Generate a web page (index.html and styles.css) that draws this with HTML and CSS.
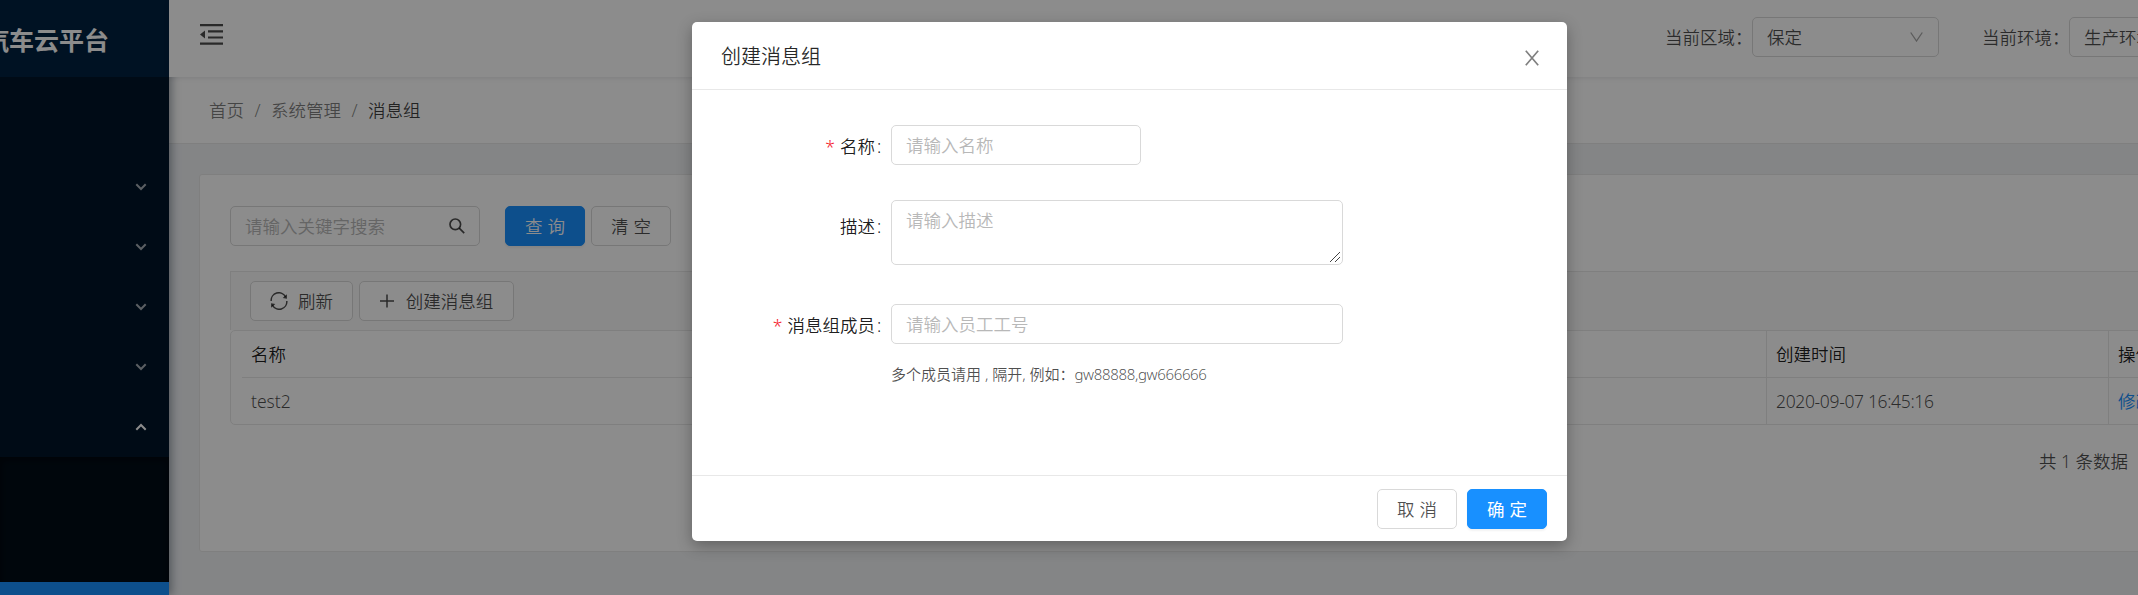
FILE: index.html
```html
<!DOCTYPE html>
<html lang="zh-CN">
<head>
<meta charset="utf-8">
<title>消息组</title>
<link rel="stylesheet" href="styles.css">
</head>
<body>
<div class="app">
  <aside class="sider">
    <div class="logo">汽车云平台</div>
    <ul class="menu">
      <li class="menu-item"></li>
      <li class="menu-item"><svg class="caret" viewBox="0 0 12 8"><path d="M1.3 1.3 6 6 10.7 1.3"/></svg></li>
      <li class="menu-item"><svg class="caret" viewBox="0 0 12 8"><path d="M1.3 1.3 6 6 10.7 1.3"/></svg></li>
      <li class="menu-item"><svg class="caret" viewBox="0 0 12 8"><path d="M1.3 1.3 6 6 10.7 1.3"/></svg></li>
      <li class="menu-item"><svg class="caret" viewBox="0 0 12 8"><path d="M1.3 1.3 6 6 10.7 1.3"/></svg></li>
      <li class="menu-item open"><svg class="caret" viewBox="0 0 12 8"><path d="M1.3 6.7 6 2 10.7 6.7"/></svg></li>
    </ul>
    <div class="submenu"><div class="submenu-selected"></div></div>
  </aside>
  <div class="main">
    <header class="header">
      <svg class="fold" viewBox="0 0 23 21"><path d="M0 0h23v2.2H0zM8 6.200h15v2.200H8zM8 12.400h15v2.200H8zM0 18.600h23v2.200H0zM0 10.400 5 6.400v8z"/></svg>
      <div class="filters">
        <span class="filter-label">当前区域：</span>
        <div class="select">保定<svg class="arrow" viewBox="0 0 13 10"><path d="M.7.500 6.500 9 12.300.500"/></svg></div>
        <span class="filter-label second">当前环境：</span>
        <div class="select">生产环境</div>
      </div>
    </header>
    <nav class="breadcrumb"><span>首页</span><i>/</i><span>系统管理</span><i>/</i><b>消息组</b></nav>
    <section class="card">
      <div class="search-row">
        <div class="search"><input class="input" placeholder="请输入关键字搜索"><svg class="search-icon" viewBox="0 0 16 16"><circle cx="6.300" cy="6.300" r="5.300"/><path d="m10.200 10.200 5 5"/></svg></div>
        <button class="btn primary two query">查询</button>
        <button class="btn two">清空</button>
      </div>
      <div class="toolbar">
        <button class="btn refresh"><svg class="sync" viewBox="0 0 18 18"><path d="M1.200 9A7.600 7.600 0 0 1 15.500 4.800M16.800 9A7.600 7.600 0 0 1 2.500 13.200"/><path class="tip" d="M16.900 2.300v4.400l-4.200-.8zM1.100 15.700v-4.400l4.200.8z"/></svg>刷新</button>
        <button class="btn create"><svg class="plus" viewBox="0 0 14 14"><path d="M0 7h14M7 .5v13"/></svg>创建消息组</button>
      </div>
      <div class="table">
        <div class="row head"><div class="cell">名称</div><div class="cell">创建时间</div><div class="cell">操作</div></div>
        <div class="row"><div class="cell">test2</div><div class="cell tight">2020-09-07 16:45:16</div><div class="cell"><a>修改</a></div></div>
      </div>
      <div class="pager">共 1 条数据</div>
    </section>
  </div>
</div>
<div class="mask">
  <div class="modal">
    <div class="modal-head"><span>创建消息组</span><svg class="close" viewBox="0 0 14 16"><path d="M.8.800 13.200 15.200M13.200.800.800 15.200"/></svg></div>
    <div class="modal-body">
      <div class="form-row name-row"><label><em>*</em>名称<s>:</s></label><input class="input short" placeholder="请输入名称"></div>
      <div class="form-row desc-row"><label>描述<s>:</s></label><div class="area"><textarea class="input" placeholder="请输入描述"></textarea><svg class="grip" viewBox="0 0 10 10"><path d="M0 10 10 0M5 10l5-5"/></svg></div></div>
      <div class="form-row member-row"><label><em>*</em>消息组成员<s>:</s></label><input class="input" placeholder="请输入员工工号"></div>
      <p class="hint">多个成员请用 , 隔开, 例如：<span class="tight">gw88888,gw666666</span></p>
    </div>
    <div class="modal-foot"><button class="btn two">取消</button><button class="btn primary two ok">确定</button></div>
  </div>
</div>
</body>
</html>
```
FILE: styles.css
```css
* { box-sizing: border-box; }
html, body { margin: 0; height: 595px; overflow: hidden; }
body {
  position: relative;
  font: 350 17.5px/26px "Noto Sans", "Noto Sans CJK SC", sans-serif;
  color: rgba(0, 0, 0, .7);
}
svg { display: block; fill: none; stroke: currentColor; flex: none; }

.app { display: flex; width: 2259px; height: 595px; background: #f0f2f5; }

.sider { display: flex; flex-direction: column; width: 169px; flex: none; background: #001529; box-shadow: 2.5px 0 8px rgba(0, 21, 41, .35); z-index: 1; }
.logo { display: flex; justify-content: flex-end; align-items: center; height: 77px; padding: 3px 60px 0 0; background: #002140; color: #fff; font-size: 25px; font-weight: 700; white-space: nowrap; overflow: hidden; }
.menu { list-style: none; margin: 0; padding: 20px 0 0; }
.menu-item { display: flex; align-items: center; justify-content: flex-end; height: 60px; padding-right: 22px; color: rgba(255, 255, 255, .65); }
.menu-item.open { color: #fff; }
.caret { width: 12px; height: 8px; stroke-width: 2; }
.submenu { flex: 1; display: flex; flex-direction: column; justify-content: flex-end; background: #000c17; box-shadow: inset 0 2px 10px rgba(0, 0, 0, .45); }
.submenu-selected { height: 13px; background: #1890ff; }

.main { flex: 1; display: flex; flex-direction: column; min-width: 0; }
.header { display: flex; justify-content: space-between; height: 77px; flex: none; padding: 17px 3px 0 31px; background: #fff; box-shadow: 0 1px 5px rgba(0, 21, 41, .1); position: relative; z-index: 2; }
.fold { width: 23px; height: 21px; margin-top: 7px; fill: currentColor; stroke: none; }
.filters { display: flex; align-items: center; height: 40px; }
.filter-label { width: 87px; white-space: nowrap; }
.filter-label.second { margin-left: 43px; }
.select { display: flex; align-items: center; justify-content: space-between; width: 187px; height: 40px; padding: 0 15px 0 14px; border: 1px solid #d9d9d9; border-radius: 5px; }
.arrow { width: 13px; height: 10px; margin-top: -1px; color: rgba(0, 0, 0, .35); stroke-width: 1.3; }

.breadcrumb { display: flex; align-items: center; height: 67px; flex: none; padding-left: 40px; background: #fff; border-bottom: 1px solid #e8e8e8; color: rgba(0, 0, 0, .5); }
.breadcrumb i { font-style: normal; width: 27px; text-align: center; }
.breadcrumb b { font-weight: 350; color: rgba(0, 0, 0, .75); }

.card { margin: 30px 30px 0; height: 378px; padding: 31px 30px; background: #fff; border: 1px solid #e8e8e8; border-radius: 3px; }
.search-row { display: flex; }
.search { position: relative; width: 250px; }
.search-icon { position: absolute; right: 15px; top: 12px; width: 16px; height: 16px; stroke-width: 1.7; }
.input { display: block; width: 100%; height: 40px; margin: 0; padding: 0 14px; border: 1px solid #d9d9d9; border-radius: 5px; background: #fff; font: inherit; outline: none; resize: none; }
.input::placeholder { color: #b8b8b8; opacity: 1; }

.btn { display: flex; align-items: center; justify-content: center; height: 40px; padding: 0; border: 1px solid #d9d9d9; border-radius: 5px; background: #fff; font: inherit; color: inherit; white-space: nowrap; }
.btn.two { width: 80px; letter-spacing: 5px; padding-left: 5px; }
.btn.primary { background: #1890ff; border-color: #1890ff; color: #fff; box-shadow: 0 2px 2px rgba(0, 0, 0, .05); }
.query { margin: 0 6px 0 25px; }
.toolbar { display: flex; gap: 6px; height: 59px; margin-top: 25px; padding: 9px 19px; background: #fafafa; border: 1px solid #e8e8e8; border-bottom: 0; }
.refresh { width: 103px; gap: 10px; }
.create { width: 155px; gap: 12px; }
.sync { width: 18px; height: 18px; stroke-width: 1.5; }
.sync .tip { fill: currentColor; stroke: none; }
.plus { width: 14px; height: 14px; stroke-width: 1.5; }

.table { height: 95px; border: 1px solid #e8e8e8; border-radius: 5px; }
.row { display: grid; grid-template-columns: 1535px 342px 1fr; height: 46px; }
.row.head { height: 47px; color: rgba(0, 0, 0, .9); background: linear-gradient(#e8e8e8, #e8e8e8) 11px 46px / 100% 1px no-repeat; }
.cell { padding: 10px 0 0 9px; white-space: nowrap; }
.cell:first-child { padding-left: 20px; }
.cell + .cell { border-left: 1px solid #e8e8e8; }
.cell a { color: #1890ff; }
.tight { letter-spacing: -.35px; }
.pager { margin: 23px 0 0 1809px; white-space: nowrap; }

.mask { position: absolute; left: 0; top: 0; z-index: 10; display: flex; justify-content: center; align-items: flex-start; width: 2259px; height: 595px; padding-top: 22px; background: rgba(0, 0, 0, .45); }
.modal { width: 875px; height: 519px; background: #fff; border-radius: 5px; box-shadow: 0 5px 15px rgba(0, 0, 0, .3); }
.modal-head { display: flex; align-items: center; justify-content: space-between; height: 68px; padding: 3px 28px 0 29px; border-bottom: 1px solid #e8e8e8; color: rgba(0, 0, 0, .85); font-size: 20px; }
.close { width: 14px; height: 16px; margin-top: 2px; color: rgba(0, 0, 0, .5); stroke-width: 1.7; }
.modal-body { height: 385px; padding: 35px 0 0; }
.form-row { display: grid; grid-template-columns: 190px 452px; column-gap: 9px; color: rgba(0, 0, 0, .9); }
.form-row label { display: flex; justify-content: flex-end; align-items: center; height: 41px; }
.form-row em { margin: 3px 5px 0 0; color: #f5222d; font-style: normal; }
.form-row s { width: 7px; padding-left: 2px; text-decoration: none; }
.short { width: 250px; }
.name-row { height: 75px; }
.desc-row { height: 104px; }
.desc-row label { height: 51px; }
.area { position: relative; height: 65px; }
.area .input { height: 65px; padding-top: 6px; overflow: hidden; }
.grip { position: absolute; right: 3px; bottom: 3px; width: 10px; height: 10px; color: #444; stroke-width: 1; }
.hint { margin: 16px 0 0 199px; font-size: 15px; white-space: nowrap; }
.modal-foot { display: flex; justify-content: flex-end; gap: 10px; height: 66px; padding: 13px 20px 0; border-top: 1px solid #e8e8e8; }
.ok { font-weight: 400; }
```
